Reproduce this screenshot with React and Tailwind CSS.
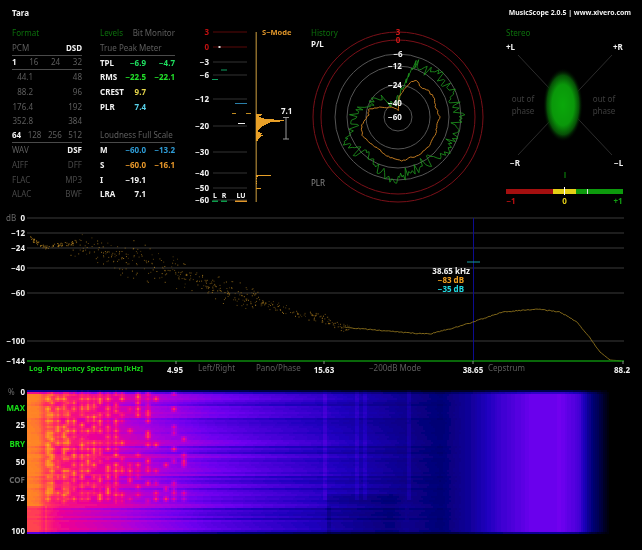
import React, { useMemo } from "react";

function rng(seed) {
  let a = seed;
  return () => {
    a |= 0; a = (a + 0x6d2b79f5) | 0;
    let t = Math.imul(a ^ (a >>> 15), 1 | a);
    t = (t + Math.imul(t ^ (t >>> 7), 61 | t)) ^ t;
    return ((t ^ (t >>> 14)) >>> 0) / 4294967296;
  };
}
const lerpStops = (stops, x) => {
  if (x <= stops[0][0]) return stops[0][1];
  for (let i = 1; i < stops.length; i++) {
    if (x <= stops[i][0]) {
      const [a, b] = [stops[i - 1], stops[i]];
      return a[1] + ((b[1] - a[1]) * (x - a[0])) / (b[0] - a[0]);
    }
  }
  return stops[stops.length - 1][1];
};

const W = "#f2f2f2";

function Row({ children, line, className = "" }) {
  return (
    <div className={`h-[14.6px] flex items-center justify-between ${line ? "border-b border-[#4a4a4a]" : ""} ${className}`}>
      {children}
    </div>
  );
}
const Gray = ({ children }) => <span className="text-[#5e5e5e]">{children}</span>;
const White = ({ children }) => <span className="text-[#f2f2f2] font-bold">{children}</span>;

function FormatPanel() {
  const rates = [["44.1", "48"], ["88.2", "96"], ["176.4", "192"], ["352.8", "384"]];
  const files = [["AIFF", "DFF"], ["FLAC", "MP3"], ["ALAC", "BWF"]];
  return (
    <div className="w-[70px] ml-[12px] shrink-0">
      <div className="h-[16px] flex items-center text-[#0c6f0c]">Format</div>
      <Row line><Gray>PCM</Gray><White>DSD</White></Row>
      <Row line><White>1</White><Gray>16</Gray><Gray>24</Gray><Gray>32</Gray></Row>
      {rates.map(([a, b]) => (
        <Row key={a}><span className="w-[21px] text-right text-[#5e5e5e]">{a}</span><Gray>{b}</Gray></Row>
      ))}
      <Row line><White>64</White><Gray>128</Gray><Gray>256</Gray><Gray>512</Gray></Row>
      <Row><Gray>WAV</Gray><White>DSF</White></Row>
      {files.map(([a, b]) => (
        <Row key={a}><span className="text-[#484848]">{a}</span><span className="text-[#484848]">{b}</span></Row>
      ))}
    </div>
  );
}

function LevelRow({ label, a, b, color }) {
  return (
    <div className="h-[14.6px] flex items-center font-bold">
      <span className="text-[#f2f2f2] w-[27px]">{label}</span>
      <span className={`w-[19px] whitespace-nowrap flex justify-end ${color}`}>{a}</span>
      <span className={`w-[29px] whitespace-nowrap flex justify-end ${color}`}>{b}</span>
    </div>
  );
}

function LevelsPanel() {
  return (
    <div className="w-[75px] ml-[18px] shrink-0">
      <div className="h-[16px] flex items-center justify-between">
        <span className="text-[#0c6f0c]">Levels</span>
        <span className="text-[#5e5e5e]">Bit Monitor</span>
      </div>
      <Row line><Gray>True Peak Meter</Gray></Row>
      <LevelRow label="TPL" a="−6.9" b="−4.7" color="text-[#1fe060]" />
      <LevelRow label="RMS" a="−22.5" b="−22.1" color="text-[#22e02a]" />
      <LevelRow label="CREST" a="9.7" b="" color="text-[#e4d44a]" />
      <LevelRow label="PLR" a="7.4" b="" color="text-[#58d2ea]" />
      <Row />
      <Row line><Gray>Loudness Full Scale</Gray></Row>
      <LevelRow label="M" a="−60.0" b="−13.2" color="text-[#2e9cd6]" />
      <LevelRow label="S" a="−60.0" b="−16.1" color="text-[#e8982a]" />
      <LevelRow label="I" a="−19.1" b="" color="text-[#f2f2f2]" />
      <LevelRow label="LRA" a="7.1" b="" color="text-[#f2f2f2]" />
    </div>
  );
}

function Meter() {
  const rows = [
    ["3", 32, "#c01010", "#5a0808"], ["0", 47, "#c01010", "#5a0808"], ["−3", 62, W, "#333"], ["−6", 75, W, "#333"],
    ["−12", 99, W, "#333"], ["−20", 126, W, "#333"], ["−30", 152, W, "#333"], ["−40", 173, W, "#333"],
    ["−50", 188, W, "#333"], ["−60", 200, W, "#333"],
  ];
  const hist = [
    [114, 6], [115, 5], [116, 3], [117, 5], [118, 8], [119, 18], [120, 28], [121, 24], [122, 14], [123, 12], [124, 10],
    [125, 8], [126, 6], [127, 5], [128, 4], [129, 3], [130, 2], [131, 2], [132, 4], [133, 6], [134, 5], [135, 7], [136, 5],
    [137, 4], [138, 3], [139, 2], [140, 2], [175, 15], [176, 2], [178, 1], [181, 1], [183, 1], [188, 5],
  ];
  return (
    <svg className="block ml-[23px] w-[92px] h-[185px] shrink-0 overflow-visible" viewBox="198 25 92 185">
      {rows.map(([t, y, c, l]) => (
        <g key={t}>
          <text x="209" y={y + 3} textAnchor="end" fill={c} fontWeight="700">{t}</text>
          <line x1="213" x2="247" y1={y} y2={y} stroke={l} />
        </g>
      ))}
      <rect x="255.5" y="32" width="1.5" height="170" fill="#8a6a2a" />
      <text x="262" y="35" fill="#e0962a" fontWeight="700" fontSize="7.5">S−Mode</text>
      {hist.map(([y, w]) => <rect key={y} x="256" y={y} width={w} height="1" fill="#e8a028" />)}
      <rect x="212" y="79" width="6" height="1" fill="#0ea060" />
      <rect x="221" y="69.5" width="6" height="1" fill="#0ea060" />
      <rect x="218.5" y="46" width="2" height="2" fill="#ddd" />
      <rect x="235" y="103" width="12" height="1" fill="#2a7fa8" />
      <rect x="232" y="113" width="4" height="1" fill="#c08a20" />
      <rect x="246" y="113" width="5" height="1" fill="#c08a20" />
      <rect x="238" y="123" width="7" height="1" fill="#eee" />
      <rect x="212" y="200.5" width="6" height="1.5" fill="#0c9a4a" />
      <rect x="221" y="200.5" width="6" height="1.5" fill="#0c9a4a" />
      <rect x="235" y="200.5" width="12" height="1.5" fill="#e0962a" />
      <text x="215" y="198" textAnchor="middle" fill={W} fontSize="7" fontWeight="700">L</text>
      <text x="224" y="198" textAnchor="middle" fill={W} fontSize="7" fontWeight="700">R</text>
      <text x="241" y="198" textAnchor="middle" fill={W} fontSize="7" fontWeight="700">LU</text>
      <text x="281" y="114" fill={W} fontWeight="700">7.1</text>
      <path d="M283 117.5h6M286 117.5v21.5M283 139h6" stroke="#999" fill="none" />
    </svg>
  );
}

const polarPoints = (pts) => pts.map(([x, y]) => [305 + x / 3, y / 3]);
function jag(pts, amp, seed, step = 1) {
  const r = rng(seed);
  const cx = 398, cy = 117;
  const out = [];
  for (let i = 0; i < pts.length; i++) {
    const [a, b] = [pts[i], pts[(i + 1) % pts.length]];
    const d = Math.hypot(b[0] - a[0], b[1] - a[1]);
    const n = Math.max(1, Math.round(d / step));
    for (let k = 0; k < n; k++) {
      const x = a[0] + ((b[0] - a[0]) * k) / n;
      const y = a[1] + ((b[1] - a[1]) * k) / n;
      const rad = Math.hypot(x - cx, y - cy) || 1;
      const j = (r() - 0.5) * amp * 2;
      out.push([x + ((x - cx) / rad) * j, y + ((y - cy) / rad) * j]);
    }
  }
  return out.map((p, i) => `${i ? "L" : "M"}${p[0].toFixed(1)} ${p[1].toFixed(1)}`).join("") + "Z";
}

function Polar() {
  const orange = polarPoints([[282, 290], [300, 265], [320, 243], [335, 242], [347, 262], [370, 272], [385, 290], [392, 320], [405, 350], [395, 370], [395, 395], [370, 440], [340, 465], [290, 483], [250, 470], [210, 440], [172, 405], [170, 375], [190, 345], [190, 328], [220, 322], [260, 322], [280, 330]]);
  const green = polarPoints([[282, 290], [300, 250], [320, 205], [340, 190], [370, 215], [420, 235], [445, 300], [465, 340], [440, 400], [440, 430], [400, 470], [360, 490], [310, 510], [280, 540], [225, 510], [180, 470], [125, 430], [135, 400], [150, 370], [150, 340], [185, 320], [235, 295], [260, 320]]);
  const greenPath = useMemo(() => jag(green, 6.5, 7, 1.8), []);
  const orangePath = useMemo(() => jag(orange, 0.8, 3, 2), []);
  const labels = [["3", 34.5, "#d01818"], ["0", 43, "#d01818"], ["−6", 57, W], ["−12", 69, W], ["−24", 88, W], ["−40", 106, W], ["−60", 120, W]];
  return (
    <svg className="block ml-[15px] w-[190px] h-[185px] shrink-0" viewBox="305 25 190 185">
      {[85, 77].map((r) => <circle key={r} cx="398" cy="117" r={r} fill="none" stroke="#7a1018" strokeWidth="1" />)}
      {[63, 51, 32, 14].map((r) => <circle key={r} cx="398" cy="117" r={r} fill="none" stroke="#555" strokeWidth="1" />)}
      <path d={greenPath} fill="none" stroke="#1f9a1f" strokeWidth="0.8" />
      <path d={orangePath} fill="none" stroke="#c07a20" strokeWidth="1" />
      {labels.map(([t, y, c]) => (
        <text key={t} x={t.length > 2 ? 395 : 398} y={y} textAnchor="middle" fill={c} fontWeight="700">{t}</text>
      ))}
      <text x="311" y="36" fill="#0c6f0c">History</text>
      <text x="311" y="47" fill={W} fontWeight="700">P/L</text>
      <text x="311" y="186" fill="#8a8a8a">PLR</text>
    </svg>
  );
}

function Stereo() {
  return (
    <svg className="block w-[147px] h-[185px] shrink-0" viewBox="495 25 147 185">
      <defs>
        <radialGradient id="gl">
          <stop offset="0" stopColor="#0aa80a" />
          <stop offset="0.55" stopColor="#0a980a" />
          <stop offset="0.8" stopColor="#064f06" />
          <stop offset="1" stopColor="#000" stopOpacity="0" />
        </radialGradient>
      </defs>
      <path d="M518 55L612 155M612 55L518 155" stroke="#2c2c2c" />
      <ellipse cx="563" cy="105" rx="20" ry="37" fill="url(#gl)" />
      <text x="506" y="36" fill="#0c6f0c">Stereo</text>
      <text x="506" y="50" fill={W} fontWeight="700">+L</text>
      <text x="613" y="50" fill={W} fontWeight="700">+R</text>
      <text x="510" y="166" fill={W} fontWeight="700">−R</text>
      <text x="614" y="166" fill={W} fontWeight="700">−L</text>
      <text x="523" y="102" textAnchor="middle" fill="#3e3e3e">out of</text>
      <text x="523" y="114" textAnchor="middle" fill="#3e3e3e">phase</text>
      <text x="604" y="102" textAnchor="middle" fill="#3e3e3e">out of</text>
      <text x="604" y="114" textAnchor="middle" fill="#3e3e3e">phase</text>
      <rect x="564.5" y="172" width="1" height="6" fill="#0b8f0b" />
      <rect x="506" y="189" width="47" height="5" fill="#a40f0f" />
      <rect x="553" y="189" width="23" height="5" fill="#e4cf16" />
      <rect x="576" y="189" width="47" height="5" fill="#0d9a0d" />
      <rect x="564" y="187" width="1" height="8" fill="#fff" />
      <rect x="587" y="189" width="1" height="5" fill="#ddd" />
      <text x="511" y="204" textAnchor="middle" fill="#c01010" fontWeight="700">−1</text>
      <text x="564.5" y="204" textAnchor="middle" fill="#e4cf16" fontWeight="700">0</text>
      <text x="618" y="204" textAnchor="middle" fill="#12a012" fontWeight="700">+1</text>
    </svg>
  );
}

function Spectrum() {
  const { dots, curve } = useMemo(() => {
    const r = rng(42);
    const trend = [[27, 245], [30, 238], [45, 247], [70, 243], [100, 252], [150, 262], [200, 282], [250, 298], [290, 312], [320, 318], [345, 327]];
    const out = [];
    for (let i = 0; i < 420; i++) {
      const x = 70 + r() * 280;
      const spread = x < 120 ? 13 : x < 180 ? 18 : x < 260 ? 12 : 5;
      const y = lerpStops(trend, x) + (r() + r() - 1) * spread * 1.2;
      out.push([x, y, 0.35 + r() * 0.55]);
    }
    for (let i = 0; i < 70; i++) {
      const x = 28 + r() * 45;
      out.push([x, lerpStops(trend, x) + (r() - 0.5) * 4, 0.8]);
    }
    const c = [[345, 327], [353, 328], [387, 331], [410, 333], [430, 334], [453, 328], [473, 322], [503, 312], [537, 309], [560, 312], [577, 322], [590, 338], [600, 352], [610, 360], [622, 361]];
    let d = "";
    for (let x = 345; x <= 622; x += 1.5) {
      const y = lerpStops(c, x) + (x < 600 ? (r() - 0.5) * 0.9 : 0);
      d += `${d ? "L" : "M"}${x} ${y.toFixed(1)}`;
    }
    return { dots: out, curve: d };
  }, []);
  const grid = [["0", 218], ["−12", 233], ["−24", 248], ["−40", 268], ["−60", 293], ["−100", 341]];
  return (
    <svg className="block w-[642px] h-[175px]" viewBox="0 210 642 175">
      {grid.map(([t, y]) => (
        <g key={t}>
          <line x1="27" x2="624" y1={y} y2={y} stroke="#3a3a3a" />
          <text x="25" y={y + 3} textAnchor="end" fill={W} fontWeight="700">{t}</text>
        </g>
      ))}
      <text x="6" y="221" fill="#6a6a6a">dB</text>
      <text x="25" y="364" textAnchor="end" fill={W} fontWeight="700">−144</text>
      <line x1="473.5" x2="473.5" y1="218" y2="361" stroke="#0c0c90" />
      <line x1="467" x2="480" y1="262" y2="262" stroke="#1a9aa0" />
      {dots.map(([x, y, o], i) => (
        <rect key={i} x={x.toFixed(1)} y={y.toFixed(1)} width="1" height="1" fill="#b08020" opacity={o.toFixed(2)} />
      ))}
      <path d={curve} fill="none" stroke="#a08020" strokeWidth="0.8" />
      <line x1="27" x2="624" y1="361" y2="361" stroke="#0d8a0d" strokeWidth="1.5" />
      {[176, 324, 473, 623].map((x) => <line key={x} x1={x} x2={x} y1="361" y2="364" stroke="#888" />)}
      <text x="29" y="371" fill="#18d818" fontWeight="700" fontSize="7.4">Log. Frequency Spectrum [kHz]</text>
      <text x="175" y="373" textAnchor="middle" fill={W} fontWeight="700">4.95</text>
      <text x="198" y="371" fill="#5e5e5e">Left/Right</text>
      <text x="256" y="371" fill="#5e5e5e">Pano/Phase</text>
      <text x="324" y="373" textAnchor="middle" fill={W} fontWeight="700">15.63</text>
      <text x="369" y="371" fill="#5e5e5e">−200dB Mode</text>
      <text x="473" y="373" textAnchor="middle" fill={W} fontWeight="700">38.65</text>
      <text x="488" y="371" fill="#5e5e5e">Cepstrum</text>
      <text x="622" y="373" textAnchor="middle" fill={W} fontWeight="700">88.2</text>
      <text x="470" y="274" textAnchor="end" fill={W} fontWeight="700">38.65 kHz</text>
      <text x="464" y="283" textAnchor="end" fill="#f0a020" fontWeight="700">−83 dB</text>
      <text x="464" y="292" textAnchor="end" fill="#20d8e0" fontWeight="700">−35 dB</text>
    </svg>
  );
}

const cmap = [
  [0, [0, 0, 0]], [0.14, [0, 0, 110]], [0.28, [30, 0, 190]], [0.42, [110, 0, 240]],
  [0.52, [170, 0, 220]], [0.62, [235, 0, 150]], [0.72, [255, 40, 100]], [0.85, [255, 130, 40]], [1, [255, 170, 40]],
];
function colorAt(v) {
  for (let i = 1; i < cmap.length; i++) {
    if (v <= cmap[i][0]) {
      const [a, b] = [cmap[i - 1], cmap[i]];
      const t = (v - a[0]) / (b[0] - a[0]);
      const c = a[1].map((q, k) => Math.round(q + (b[1][k] - q) * t));
      return `rgb(${c[0]},${c[1]},${c[2]})`;
    }
  }
  return "rgb(255,170,40)";
}

function Spectrogram() {
  const paths = useMemo(() => {
    const r = rng(11);
    const X0 = 27, X1 = 612, Y0 = 390, Y1 = 534, CW = 2, CH = 2;
    const base = [[27, 0.86], [38, 0.84], [44, 0.75], [60, 0.66], [120, 0.58], [170, 0.49], [210, 0.42], [260, 0.36], [320, 0.3], [400, 0.2], [440, 0.15], [470, 0.22], [500, 0.33], [530, 0.41], [560, 0.42], [578, 0.35], [590, 0.17], [600, 0.08], [609, 0]];
    const nRows = Math.ceil((Y1 - Y0) / CH);
    const stripes = Array.from({ length: nRows }, () => (r() - 0.5));
    const smooth = stripes.map((s, i) => (s * 1.2 + (stripes[i - 1] || 0) * 0.4 + (stripes[i + 1] || 0) * 0.4));
    [403, 417, 445, 452, 475, 487, 508, 517].forEach((y) => { smooth[Math.round((y - Y0) / CH)] = -0.9; });
    const colsX = [];
    for (let x = 46; x < 185; ) { colsX.push(x); x += 5.2 + (x - 46) * 0.035; }
    const blobs = [];
    colsX.forEach((cx) => {
      for (let y = 392; y < 500; y += 5.6) {
        const p = cx < 120 ? 0.78 : cx < 150 ? 0.55 : 0.34;
        if (r() < p) blobs.push([cx, y + (r() - 0.5) * 2, 0.09 + r() * 0.15]);
      }
    });
    const nCols = Math.ceil((X1 - X0) / CW);
    const blobField = new Float32Array(nRows * nCols);
    blobs.forEach(([cx, cy, a]) => {
      const ci = Math.round((cx - X0) / CW), ri = Math.round((cy - Y0) / CH);
      for (let dy = -2; dy <= 2; dy++) for (let dx = -2; dx <= 2; dx++) {
        const i = ci + dx, j = ri + dy;
        if (i >= 0 && i < nCols && j >= 0 && j < nRows) blobField[j * nCols + i] += a * Math.exp(-(dx * dx + dy * dy) / 1.4);
      }
    });
    const groups = new Map();
    for (let j = 0; j < nRows; j++) {
      const y = Y0 + j * CH;
      let runStart = 0, runC = null;
      for (let i = 0; i <= nCols; i++) {
        let key = null;
        if (i < nCols) {
          const x = X0 + i * CW;
          let v = lerpStops(base, x);
          const amp = lerpStops([[27, 0.02], [50, 0.05], [200, 0.08], [330, 0.05], [430, 0.015], [470, 0]], x);
          v += smooth[j] * amp;
          v += blobField[j * nCols + i];
          if (y > 505 && x > 45 && x < 330) v -= 0.03;
          if (y > 505 && x < 45) v -= lerpStops([[27, 0.1], [45, 0.07]], x);
          if (y > 492 && x > 325 && x < 405) v -= lerpStops([[325, 0.05], [390, 0.05], [405, 0]], x);
          if ([324, 356, 364, 408].some((q) => Math.abs(x - q) < 1.5) && y < 500) v += 0.04;
          const edge = Math.min(1, (y - Y0 + 1) / 4, (Y1 - y) / 4);
          v *= edge;
          key = Math.max(0, Math.min(80, Math.round(v * 80)));
        }
        if (key !== runC) {
          if (runC !== null) {
            const s = `M${X0 + runStart * CW} ${y}h${(i - runStart) * CW}v${CH}h-${(i - runStart) * CW}z`;
            groups.set(runC, (groups.get(runC) || "") + s);
          }
          runStart = i; runC = key;
        }
      }
    }
    return [...groups.entries()].map(([k, d]) => ({ c: colorAt(k / 80), d }));
  }, []);
  const labels = [["0", 392, W], ["MAX", 408, "#18e018"], ["25", 425, W], ["BRY", 444, "#18e018"], ["50", 462, W], ["COF", 480, "#6a6a6a"], ["75", 498, W], ["100", 531, W]];
  return (
    <svg className="block w-[642px] h-[165px]" viewBox="0 385 642 165">
      <defs>
        <filter id="sb" x="-2%" y="-2%" width="104%" height="104%"><feGaussianBlur stdDeviation="0.6" /></filter>
      </defs>
      <g filter="url(#sb)">
        {paths.map((p) => <path key={p.c} d={p.d} fill={p.c} shapeRendering="crispEdges" />)}
      </g>
      {labels.map(([t, y, c]) => (
        <text key={t} x="25" y={y + 3} textAnchor="end" fill={c} fontWeight="700">{t}</text>
      ))}
      <text x="8" y="395" fill="#6a6a6a">%</text>
    </svg>
  );
}

export default function App() {
  return (
    <div className="w-[642px] h-[550px] bg-black overflow-hidden text-[8px] leading-none font-['Noto_Sans','Liberation_Sans',sans-serif] blur-[0.35px]">
      <div className="h-[25px] flex items-center justify-between pl-[12px] pr-[11px] pt-[1px] text-[#f2f2f2] font-bold">
        <span>Tara</span>
        <span className="text-[6.9px]">MusicScope 2.0.5 | www.xivero.com</span>
      </div>
      <div className="h-[185px] flex">
        <FormatPanel />
        <LevelsPanel />
        <Meter />
        <Polar />
        <Stereo />
      </div>
      <Spectrum />
      <Spectrogram />
    </div>
  );
}
